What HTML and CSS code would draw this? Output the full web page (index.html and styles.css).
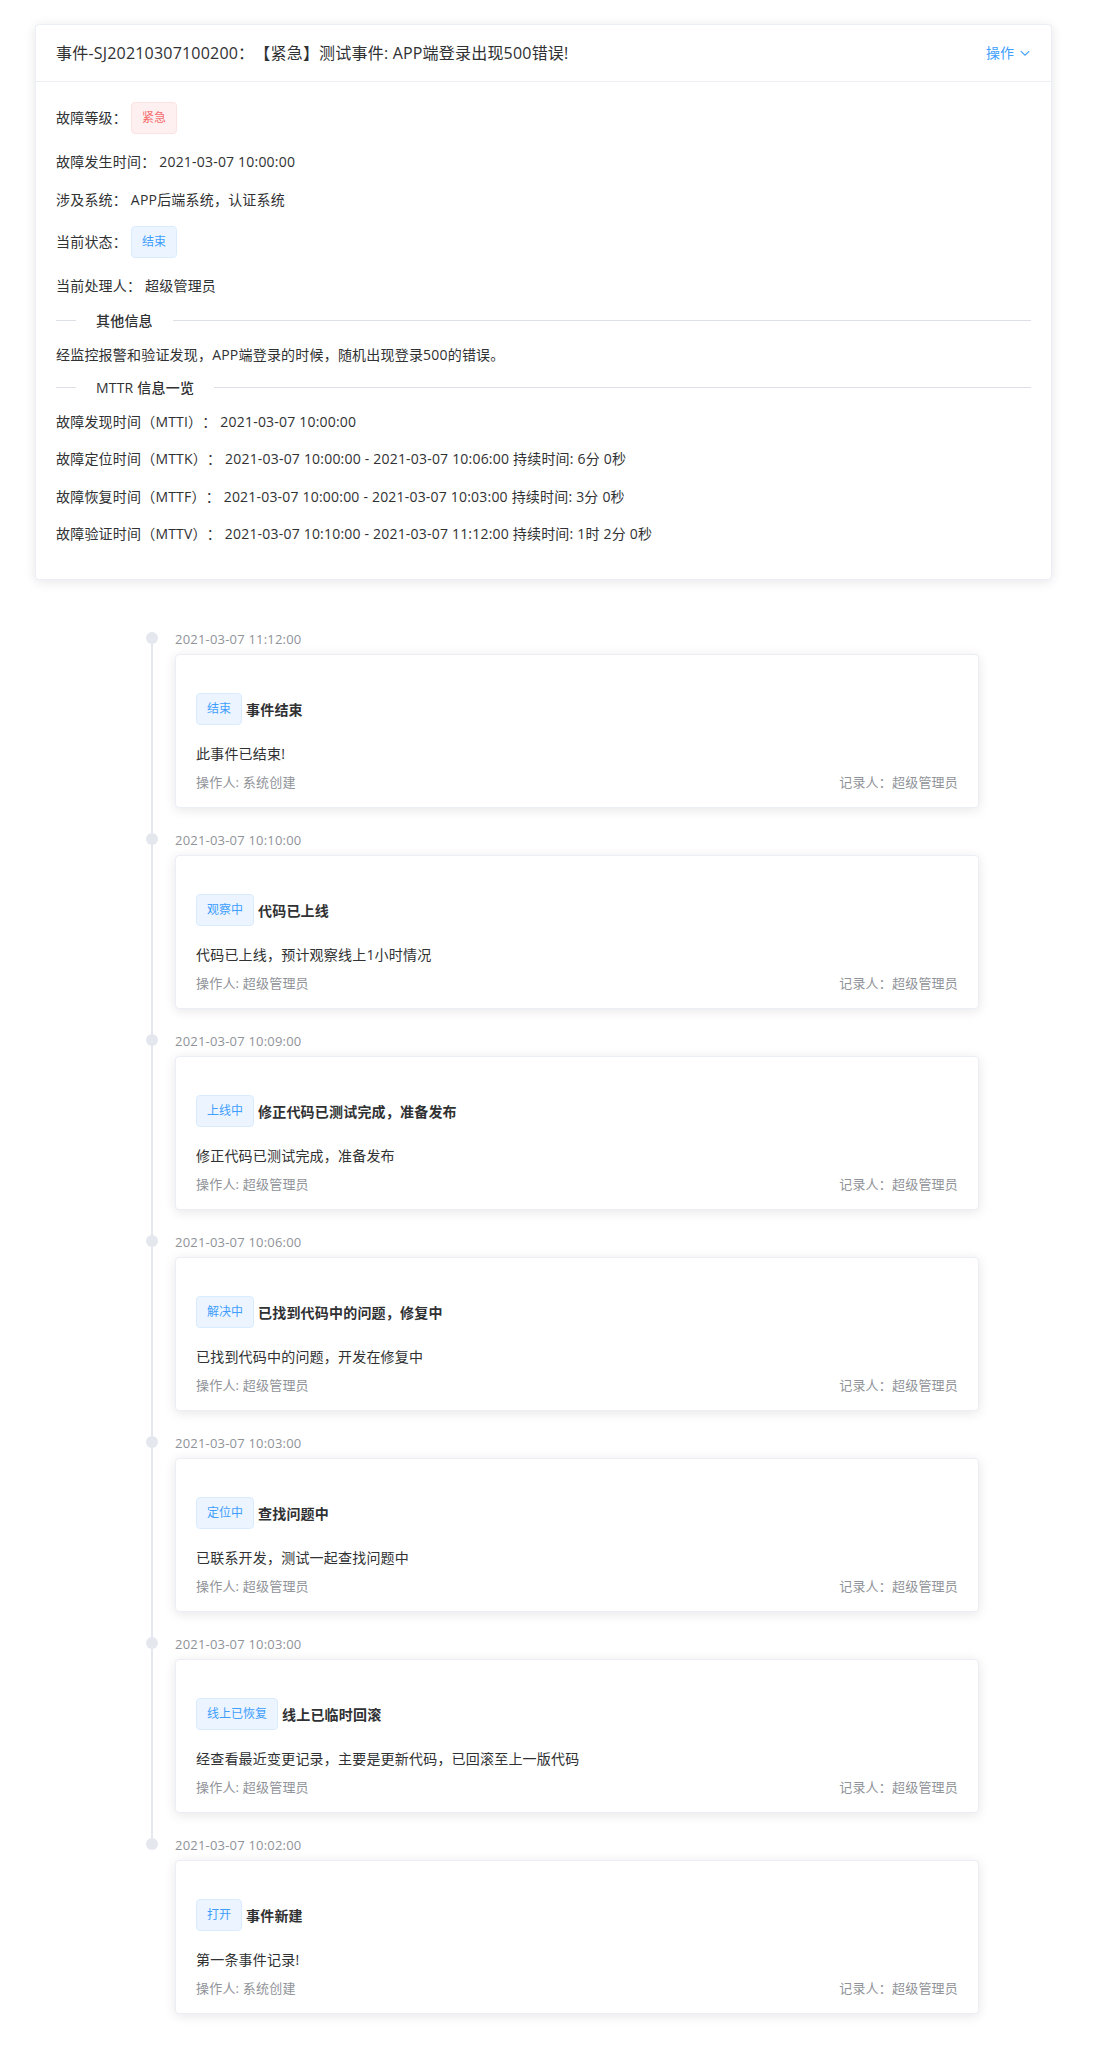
FILE: index.html
```html
<!DOCTYPE html>
<html lang="zh-CN">
<head>
<meta charset="utf-8">
<title>事件详情</title>
<link rel="stylesheet" href="styles.css">
</head>
<body>
<div class="page">
  <div class="card info-card">
    <div class="card-header">
      <span class="title">事件-SJ20210307100200：【紧急】测试事件: APP端登录出现500错误!</span>
      <span class="dropdown">操作<svg class="chevron" viewBox="0 0 12 12" width="12" height="12"><path d="M1.8 4.2 L6 8.2 L10.2 4.2" fill="none" stroke="#409EFF" stroke-width="1.1"/></svg></span>
    </div>
    <div class="card-body">
      <div class="row tag-row r1"><span class="label">故障等级：</span><span class="tag tag-danger">紧急</span></div>
      <div class="row r2">故障发生时间： 2021-03-07 10:00:00</div>
      <div class="row r3">涉及系统： APP后端系统，认证系统</div>
      <div class="row tag-row r4"><span class="label">当前状态：</span><span class="tag">结束</span></div>
      <div class="row r5">当前处理人： 超级管理员</div>
      <div class="divider d1"><span class="divider-text">其他信息</span></div>
      <div class="row r6">经监控报警和验证发现，APP端登录的时候，随机出现登录500的错误。</div>
      <div class="divider d2"><span class="divider-text">MTTR 信息一览</span></div>
      <div class="row m1">故障发现时间（MTTI）： 2021-03-07 10:00:00</div>
      <div class="row m2">故障定位时间（MTTK）： 2021-03-07 10:00:00 - 2021-03-07 10:06:00 持续时间: 6分 0秒</div>
      <div class="row m2">故障恢复时间（MTTF）： 2021-03-07 10:00:00 - 2021-03-07 10:03:00 持续时间: 3分 0秒</div>
      <div class="row m2 last">故障验证时间（MTTV）： 2021-03-07 10:10:00 - 2021-03-07 11:12:00 持续时间: 1时 2分 0秒</div>
    </div>
  </div>

  <ul class="timeline">
    <li class="tl-item">
      <span class="tl-dot"></span>
      <div class="tl-wrap">
        <div class="tl-time">2021-03-07 11:12:00</div>
        <div class="card tl-card">
          <div class="tl-head"><span class="tag">结束</span><span class="tl-title">事件结束</span></div>
          <p class="tl-content">此事件已结束!</p>
          <div class="tl-foot"><span>操作人: 系统创建</span><span>记录人：超级管理员</span></div>
        </div>
      </div>
    </li>
    <li class="tl-item">
      <span class="tl-dot"></span>
      <div class="tl-wrap">
        <div class="tl-time">2021-03-07 10:10:00</div>
        <div class="card tl-card">
          <div class="tl-head"><span class="tag">观察中</span><span class="tl-title">代码已上线</span></div>
          <p class="tl-content">代码已上线，预计观察线上1小时情况</p>
          <div class="tl-foot"><span>操作人: 超级管理员</span><span>记录人：超级管理员</span></div>
        </div>
      </div>
    </li>
    <li class="tl-item">
      <span class="tl-dot"></span>
      <div class="tl-wrap">
        <div class="tl-time">2021-03-07 10:09:00</div>
        <div class="card tl-card">
          <div class="tl-head"><span class="tag">上线中</span><span class="tl-title">修正代码已测试完成，准备发布</span></div>
          <p class="tl-content">修正代码已测试完成，准备发布</p>
          <div class="tl-foot"><span>操作人: 超级管理员</span><span>记录人：超级管理员</span></div>
        </div>
      </div>
    </li>
    <li class="tl-item">
      <span class="tl-dot"></span>
      <div class="tl-wrap">
        <div class="tl-time">2021-03-07 10:06:00</div>
        <div class="card tl-card">
          <div class="tl-head"><span class="tag">解决中</span><span class="tl-title">已找到代码中的问题，修复中</span></div>
          <p class="tl-content">已找到代码中的问题，开发在修复中</p>
          <div class="tl-foot"><span>操作人: 超级管理员</span><span>记录人：超级管理员</span></div>
        </div>
      </div>
    </li>
    <li class="tl-item">
      <span class="tl-dot"></span>
      <div class="tl-wrap">
        <div class="tl-time">2021-03-07 10:03:00</div>
        <div class="card tl-card">
          <div class="tl-head"><span class="tag">定位中</span><span class="tl-title">查找问题中</span></div>
          <p class="tl-content">已联系开发，测试一起查找问题中</p>
          <div class="tl-foot"><span>操作人: 超级管理员</span><span>记录人：超级管理员</span></div>
        </div>
      </div>
    </li>
    <li class="tl-item">
      <span class="tl-dot"></span>
      <div class="tl-wrap">
        <div class="tl-time">2021-03-07 10:03:00</div>
        <div class="card tl-card">
          <div class="tl-head"><span class="tag">线上已恢复</span><span class="tl-title">线上已临时回滚</span></div>
          <p class="tl-content">经查看最近变更记录，主要是更新代码，已回滚至上一版代码</p>
          <div class="tl-foot"><span>操作人: 超级管理员</span><span>记录人：超级管理员</span></div>
        </div>
      </div>
    </li>
    <li class="tl-item">
      <span class="tl-dot"></span>
      <div class="tl-wrap">
        <div class="tl-time">2021-03-07 10:02:00</div>
        <div class="card tl-card">
          <div class="tl-head"><span class="tag">打开</span><span class="tl-title">事件新建</span></div>
          <p class="tl-content">第一条事件记录!</p>
          <div class="tl-foot"><span>操作人: 系统创建</span><span>记录人：超级管理员</span></div>
        </div>
      </div>
    </li>
  </ul>
</div>
</body>
</html>
```

FILE: styles.css
```css
* { box-sizing: border-box; }

html, body {
  margin: 0;
  padding: 0;
  background: #fff;
}

body {
  font-family: "Open Sans", "Noto Sans CJK SC", sans-serif;
  font-size: 14px;
  color: #303133;
  letter-spacing: 0.2px;
  text-spacing-trim: space-all;
}

.page {
  width: 1052px;
  padding: 24px 0 0 35px;
}

.card {
  background: #fff;
  border: 1px solid #EBEEF5;
  border-radius: 4px;
  box-shadow: 0 2px 12px 0 rgba(0, 0, 0, 0.1);
  overflow: hidden;
}

/* ---------- info card ---------- */
.info-card {
  width: 1017px;
}

.card-header {
  display: flex;
  justify-content: space-between;
  align-items: center;
  padding: 18px 20px;
  border-bottom: 1px solid #EBEEF5;
  line-height: 20px;
}

.title {
  font-size: 16px;
  color: #303133;
}

.dropdown {
  display: flex;
  align-items: center;
  font-size: 14px;
  letter-spacing: 0;
  color: #409EFF;
}

.chevron {
  margin-left: 5px;
  display: block;
}

.card-body {
  padding: 20px 20px 20px;
}

.row {
  line-height: 24px;
  white-space: nowrap;
}

.tag-row {
  display: flex;
  align-items: center;
  height: 32px;
}

.label { margin-right: 4px; }

.r1 { margin-top: 0; }
.r2 { margin-top: 16px; }
.r3 { margin-top: 14px; }
.r4 { margin-top: 14px; }
.r5 { margin-top: 16px; }
.d1 { margin-top: 10px; }
.r6 { margin-top: 11px; }
.d2 { margin-top: 8px; }
.m1 { margin-top: 11px; }
.m2 { margin-top: 13.33px; }
.last { margin-bottom: 13px; }

.tag {
  display: inline-block;
  height: 32px;
  line-height: 30px;
  padding: 0 10px;
  font-size: 12px;
  letter-spacing: 0;
  border-radius: 4px;
  background: #ecf5ff;
  border: 1px solid #d9ecff;
  color: #409EFF;
  white-space: nowrap;
}

.tag-danger {
  background: #fef0f0;
  border-color: #fde2e2;
  color: #F56C6C;
}

.divider {
  display: flex;
  align-items: center;
  height: 24px;
}

.divider::before {
  content: "";
  width: 20px;
  height: 1px;
  background: #DCDFE6;
}

.divider::after {
  content: "";
  flex: 1;
  height: 1px;
  background: #DCDFE6;
}

.divider-text {
  padding: 0 20px;
  font-weight: 500;
  color: #303133;
}

/* ---------- timeline ---------- */
.timeline {
  list-style: none;
  margin: 52px 0 0 112px;
  padding: 0;
  width: 832px;
}

.tl-item {
  display: grid;
  grid-template-columns: 28px 1fr;
  padding-bottom: 25px;
  background: linear-gradient(#E4E7ED, #E4E7ED) 4px 0 / 2px 100% no-repeat;
}

.tl-item:last-child {
  background: none;
}

.tl-dot {
  width: 12px;
  height: 12px;
  margin-left: -1px;
  border-radius: 50%;
  background: #E4E7ED;
}

.tl-wrap {
  margin-top: -3px;
}

.tl-time {
  padding-top: 4px;
  margin-bottom: 8px;
  font-size: 13px;
  line-height: 13px;
  color: #909399;
}

.tl-card {
  padding: 38px 20px 14.5px;
}

.tl-head {
  display: flex;
  align-items: center;
  height: 32px;
}

.tl-title {
  margin-left: 4px;
  font-weight: 700;
  font-size: 14px;
  color: #303133;
}

.tl-content {
  margin: 19px 0 0;
  line-height: 20px;
  font-size: 14px;
  color: #303133;
}

.tl-foot {
  display: flex;
  justify-content: space-between;
  margin-top: 8.5px;
  line-height: 20px;
  font-size: 13px;
  color: #909399;
}
```
